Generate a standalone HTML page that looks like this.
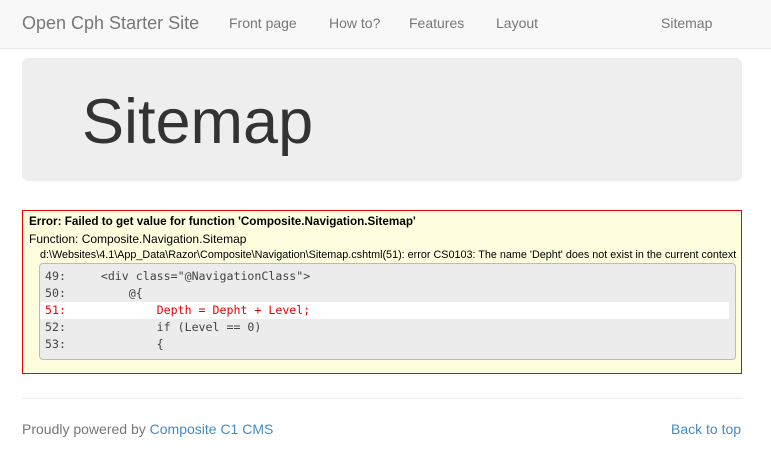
<!DOCTYPE html>
<html><head><style>
*{margin:0;padding:0;box-sizing:border-box}
body{width:771px;height:463px;background:#fff;font-family:"Liberation Sans",sans-serif;position:relative;overflow:hidden;color:#333}
.nav{position:absolute;left:0;top:0;width:771px;height:49px;background:#f8f8f8;border-bottom:1px solid #e7e7e7}
.nav span{position:absolute;top:15px;font-size:14px;color:#777}
.brand{font-size:18px!important;top:13px!important}
.jumbo{position:absolute;left:22px;top:58px;width:720px;height:123px;background:#eee;border-radius:6px}
.jumbo h1{position:absolute;left:60px;top:30px;font-size:63px;font-weight:normal;color:#333;line-height:1.1}
.err{position:absolute;left:22px;top:210px;width:720px;height:164px;background:#ffffe0;border:1px solid #e00;font-size:12px;color:#000}
.t{position:absolute;left:7px;white-space:nowrap}
.code{position:absolute;left:16px;top:52px;width:697px;height:97px;background:#ececec;border:1px solid #bbb;border-radius:4px;font-family:"DejaVu Sans Mono","Liberation Mono",monospace;font-size:11.6px;color:#444}
.code div{position:absolute;left:0;height:17px;line-height:17px;white-space:pre;padding-left:5px}
.hl{background:#fff;width:689px;color:#e00}
.foot{position:absolute;top:398px;left:22px;width:720px;border-top:1px solid #eee}
.f{position:absolute;top:421px;font-size:14px;color:#777}
a{color:#428bca;text-decoration:none}
</style></head><body>
<div class="nav">
<span class="brand" style="left:22px">Open Cph Starter Site</span>
<span style="left:229px">Front page</span>
<span style="left:329px">How to?</span>
<span style="left:409px">Features</span>
<span style="left:496px">Layout</span>
<span style="left:661px">Sitemap</span>
</div>
<div class="jumbo"><h1>Sitemap</h1></div>
<div class="err">
<div class="t" style="top:4px;left:6px;font-weight:bold;font-size:11.7px">Error: Failed to get value for function 'Composite.Navigation.Sitemap'</div>
<div class="t" style="top:21px;left:6px">Function: Composite.Navigation.Sitemap</div>
<div class="t" style="top:38px;left:17px;font-size:10.8px">d:\Websites\4.1\App_Data\Razor\Composite\Navigation\Sitemap.cshtml(51): error CS0103: The name 'Depht' does not exist in the current context</div>
<div class="code">
<div style="top:4px">49:     &lt;div class="@NavigationClass"&gt;</div>
<div style="top:21px">50:         @{</div>
<div class="hl" style="top:38px">51:             Depth = Depht + Level;</div>
<div style="top:55px">52:             if (Level == 0)</div>
<div style="top:72px">53:             {</div>
</div>
</div>
<div class="foot"></div>
<div class="f" style="left:22px">Proudly powered by <a>Composite C1 CMS</a></div>
<div class="f" style="left:671px"><a>Back to top</a></div>
</body></html>
